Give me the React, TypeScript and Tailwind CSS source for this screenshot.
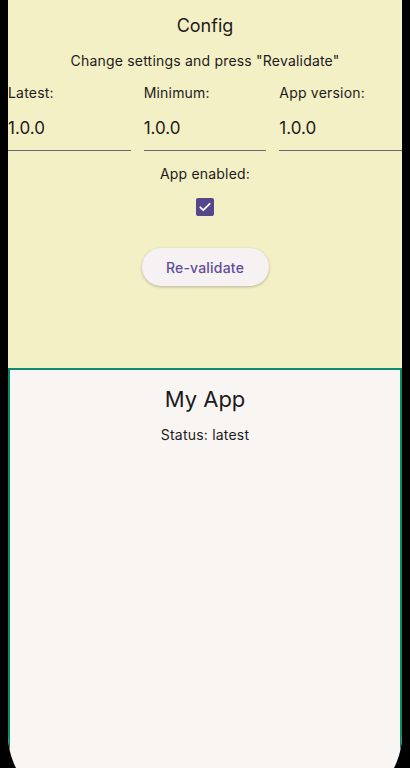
import React, { useState } from 'react';

const VersionField: React.FC<{ label: string; value: string }> = ({ label, value }) => (
  <div className="flex flex-col">
    <span className="text-[14px] leading-[20px] tracking-[0.2px] text-[#1d1b20]">{label}</span>
    <div className="h-[43px] flex items-center border-b border-[#6b6770] mt-[5px]">
      <span className="text-[17px] text-[#1d1b20]">{value}</span>
    </div>
  </div>
);

export default function App() {
  const [enabled, setEnabled] = useState(true);

  return (
    <div className="w-[410px] h-[768px] bg-black overflow-hidden" style={{ fontFamily: 'Inter, Roboto, "Noto Sans", sans-serif' }}>
      {/* screen mask: rounded corners run past the bottom edge */}
      <div className="mx-[8px] h-[807px] rounded-b-[72px] overflow-hidden flex flex-col">
        {/* Config area */}
        <div className="h-[368px] shrink-0 bg-[#f3f0c6] flex flex-col items-center pt-[14px]">
          <h1 className="text-[18px] leading-[24px] text-[#1d1b20]">Config</h1>
          <p className="mt-[13px] text-[14px] leading-[20px] tracking-[0.2px] text-[#1d1b20]">
            Change settings and press "Revalidate"
          </p>
          <div className="w-full grid grid-cols-3 gap-[13px] mt-[12px]">
            <VersionField label="Latest:" value="1.0.0" />
            <VersionField label="Minimum:" value="1.0.0" />
            <VersionField label="App version:" value="1.0.0" />
          </div>
          <span className="mt-[13px] text-[14px] leading-[20px] tracking-[0.2px] text-[#1d1b20]">App enabled:</span>
          <button
            onClick={() => setEnabled(!enabled)}
            className="mt-[14px] w-[18px] h-[18px] rounded-[2px] bg-[#56478c] flex items-center justify-center"
          >
            {enabled && (
              <svg width="14" height="14" viewBox="0 0 24 24" fill="none">
                <path d="M4 12.5l5 5L20 6.5" stroke="white" strokeWidth="3" strokeLinecap="round" strokeLinejoin="round" />
              </svg>
            )}
          </button>
          <button className="mt-[32px] w-[127px] h-[38px] rounded-full bg-[#f6f1f3] text-[14px] font-medium tracking-[0.2px] text-[#5e4f97] shadow-[0_1px_3px_rgba(0,0,0,0.25)]">
            Re-validate
          </button>
        </div>

        {/* App area */}
        <div className="flex-1 bg-[#f8f5f3] border-t-2 border-x-2 border-[#0c8a6c] flex flex-col items-center pt-[14px]">
          <h2 className="text-[22px] leading-[30px] text-[#1d1b20]">My App</h2>
          <p className="mt-[11px] text-[14px] leading-[20px] tracking-[0.2px] text-[#1d1b20]">Status: latest</p>
        </div>
      </div>
    </div>
  );
}
